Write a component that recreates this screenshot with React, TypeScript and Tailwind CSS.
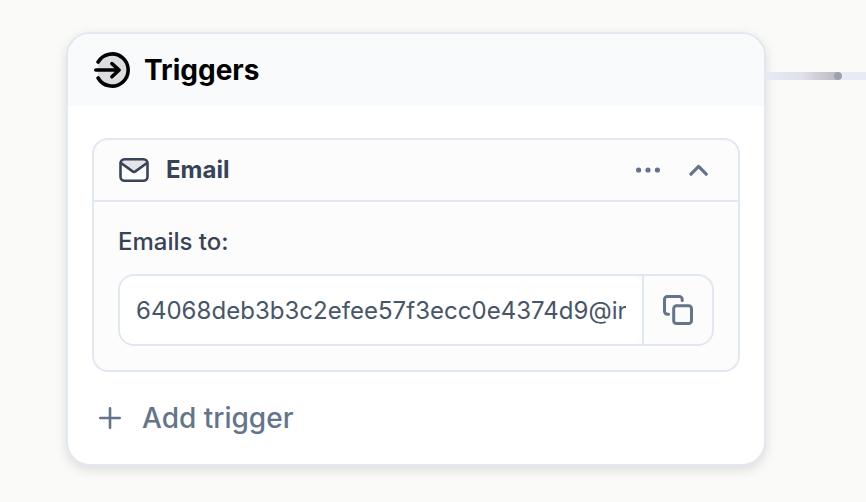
function TriggerIcon() {
  return (
    <svg width="36" height="36" viewBox="0 0 36 36" fill="none" stroke="#000" strokeWidth="3.6" strokeLinecap="round" strokeLinejoin="round">
      <circle cx="18" cy="18" r="15" fill="#dcdddf" stroke="none" />
      <path d="M0 12h4v12H0z" fill="#f8fafc" stroke="none" />
      <path d="M4.1 10A16.1 16.1 0 1 1 4.1 26" />
      <path d="M1.8 18H25M17.9 11.6l7.2 6.4-7.2 6.8" />
    </svg>
  );
}

function MailIcon() {
  return (
    <svg width="30" height="24" viewBox="0 0 30 24" fill="none" stroke="#374357" strokeWidth="2.6" strokeLinecap="round" strokeLinejoin="round">
      <path d="M1.8 4.5 15 14.5 28.2 4.5 26 1.4H4z" fill="#e3e5e8" stroke="none" />
      <rect x="1.5" y="1.3" width="27" height="21.4" rx="4" />
      <path d="M2 5 13.6 13.4a2.5 2.5 0 0 0 2.8 0L28 5" />
    </svg>
  );
}

function CopyIcon() {
  return (
    <svg width="30" height="30" viewBox="0 0 30 30" fill="none" stroke="#64748b" strokeWidth="3" strokeLinecap="round" strokeLinejoin="round">
      <rect x="10.7" y="10.7" width="17.8" height="17.8" rx="2.8" />
      <path d="M5.6 19.2H4.4a2.9 2.9 0 0 1-2.9-2.9V4.4a2.9 2.9 0 0 1 2.9-2.9h11.9a2.9 2.9 0 0 1 2.9 2.9v1.2" />
    </svg>
  );
}

export default function App() {
  return (
    <div className="flex h-[502px] w-[866px] items-start overflow-hidden bg-[#fafaf8] pt-8 pl-[66px] font-['Inter',sans-serif]">
      <section className="h-[434px] w-[700px] shrink-0 overflow-hidden rounded-3xl border-2 border-[#e2e8f0] bg-white shadow-[0_4px_12px_rgba(0,0,0,0.12)]">
        <header className="flex h-[72px] items-center gap-[14px] bg-[#f8fafc] pl-[26px]">
          <TriggerIcon />
          <h1 className="text-[28px] leading-9 font-bold text-black">Triggers</h1>
        </header>
        <div className="px-6 pt-8">
          <div className="h-[234px] rounded-2xl border-2 border-[#e2e8f0] bg-[#fcfcfc]">
            <div className="flex h-[62px] items-center border-b-2 border-[#e2e8f0] pr-[29px] pl-[25px]">
              <MailIcon />
              <h2 className="ml-[17px] flex-1 text-2xl font-bold text-[#374357]">Email</h2>
              <svg width="24" height="6" viewBox="0 0 24 6" fill="#64748b">
                <circle cx="2.6" cy="3" r="2.6" />
                <circle cx="12" cy="3" r="2.6" />
                <circle cx="21.4" cy="3" r="2.6" />
              </svg>
              <svg className="ml-[29px]" width="20" height="12" viewBox="0 0 20 12" fill="none" stroke="#64748b" strokeWidth="3.2" strokeLinecap="round" strokeLinejoin="round">
                <path d="M2 10.2 9.6 2.4l7.6 7.8" />
              </svg>
            </div>
            <div className="px-6 pt-6">
              <p className="text-2xl font-medium text-[#374357]">Emails to:</p>
              <div className="mt-4 flex h-[72px] overflow-hidden rounded-2xl border-2 border-[#e2e8f0]">
                <div className="flex w-[522px] items-center rounded-[14px] bg-white pt-[2px] pl-4">
                  <span className="w-[490px] overflow-hidden text-2xl tracking-[0.03px] whitespace-nowrap text-[#475569]">64068deb3b3c2efee57f3ecc0e4374d9@inbound</span>
                </div>
                <div className="flex flex-1 items-center justify-center border-l-2 border-[#e2e8f0]">
                  <CopyIcon />
                </div>
              </div>
            </div>
          </div>
          <div className="mt-7 flex items-center gap-[21px] pl-[7px] text-[#64748b]">
            <svg width="22" height="22" viewBox="0 0 22 22" stroke="currentColor" strokeWidth="2.6" strokeLinecap="round">
              <path d="M11 1.3v19.4M1.3 11h19.4" />
            </svg>
            <span className="text-[28px] leading-9 font-medium">Add trigger</span>
          </div>
        </div>
      </section>
      <div className="mt-10 flex h-2 flex-1 items-center bg-[#e8ebf5]">
        <div className="h-2 w-[72px] bg-linear-to-r from-[#e8ebf5] via-[#dfe0e9] to-[#bababf]" />
        <div className="-ml-1 size-2 rounded-full bg-[#9ca3af]" />
      </div>
    </div>
  );
}
